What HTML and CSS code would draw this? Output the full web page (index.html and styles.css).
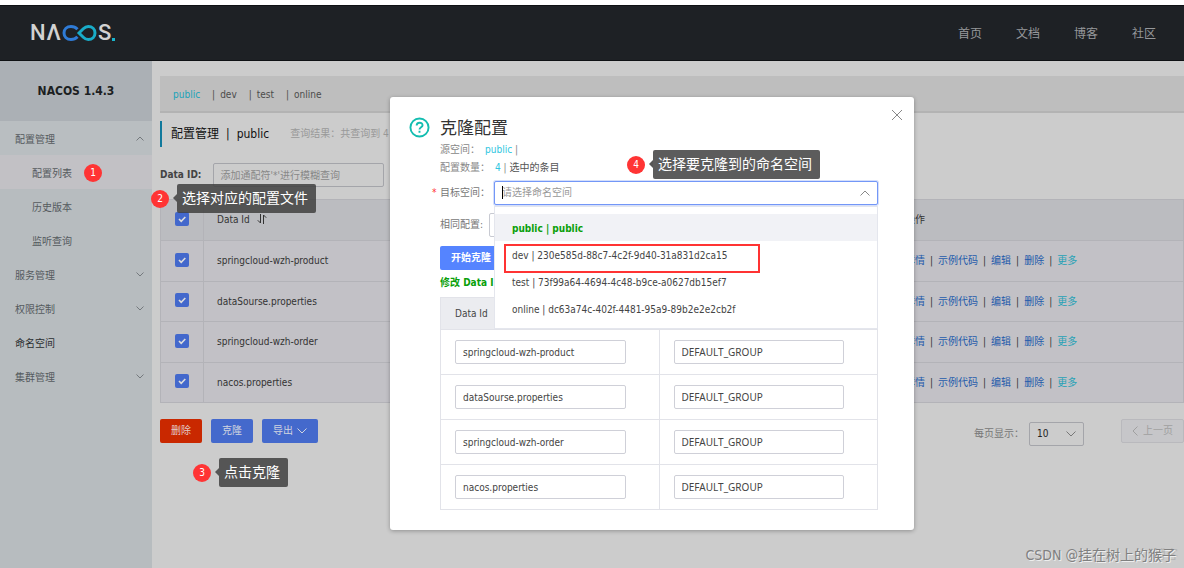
FILE: index.html
```html
<!DOCTYPE html>
<html lang="zh-CN">
<head>
<meta charset="utf-8">
<title>NACOS</title>
<link rel="stylesheet" href="styles.css">
</head>
<body>
<header class="topbar">
  <a class="logo" href="#" aria-label="NACOS">
    <span>N</span><span class="lambda">Λ</span>
    <svg width="35" height="18" viewBox="0 0 35 18" fill="none">
      <path stroke="#2f7bd6" d="M15.5 5.2C13.6 3.2 11.800 2.400 9 2.400C4.800 2.400 2 5.200 2 9s2.800 6.600 7 6.600c2.800 0 4.600-.8 6.500-2.800"/>
      <path stroke="#19acc9" d="M17 9l4.300-4.300C22.800 3.200 24.400 2.400 26.300 2.400C30.200 2.400 33 5.200 33 9s-2.800 6.600-6.700 6.600c-1.900 0-3.500-.8-5-2.300z"/>
    </svg>
    <span>S</span><i class="dot"></i>
  </a>
  <nav class="topnav"><a href="#">首页</a><a href="#">文档</a><a href="#">博客</a><a href="#">社区</a></nav>
</header>
<div class="body">
  <aside class="side">
    <h1 class="side-title">NACOS 1.4.3</h1>
    <nav class="menu">
      <a class="open" href="#">配置管理<svg class="chev" viewBox="0 0 8 5"><path d="M.5 4.500L4 1l3.500 3.500"/></svg></a>
      <a class="sub active" href="#">配置列表</a>
      <a class="sub" href="#">历史版本</a>
      <a class="sub" href="#">监听查询</a>
      <a href="#">服务管理<svg class="chev" viewBox="0 0 8 5"><path d="M.5 .5L4 4 7.500 .5"/></svg></a>
      <a href="#">权限控制<svg class="chev" viewBox="0 0 8 5"><path d="M.5 .5L4 4 7.500 .5"/></svg></a>
      <a class="plain" href="#">命名空间</a>
      <a href="#">集群管理<svg class="chev" viewBox="0 0 8 5"><path d="M.5 .5L4 4 7.500 .5"/></svg></a>
    </nav>
  </aside>
  <main class="main">
    <div class="spaces"><a class="on" href="#">public</a><b>|</b><a href="#">dev</a><b>|</b><a href="#">test</a><b>|</b><a href="#">online</a></div>
    <div class="heading"><h2>配置管理<span class="bar">|</span>public</h2><span class="result">查询结果：共查询到 4</span></div>
    <div class="search"><label for="did">Data ID:</label><input id="did" type="text" placeholder="添加通配符'*'进行模糊查询"></div>
    <table class="list">
      <thead><tr><th class="tick"><input type="checkbox" aria-label="全选" checked></th><th>Data Id<svg class="sort" viewBox="0 0 10 10"><path d="M3.500 0v9L.8 6.300M6.500 10V1l2.700 2.700"/></svg></th><th class="ops">操作</th></tr></thead>
      <tbody>
        <tr><td class="tick"><input type="checkbox" aria-label="springcloud-wzh-product" checked></td><td>springcloud-wzh-product</td><td class="ops"><a href="#">详情</a><i>|</i><a href="#">示例代码</a><i>|</i><a href="#">编辑</a><i>|</i><a href="#">删除</a><i>|</i><a class="more" href="#">更多</a></td></tr>
        <tr><td class="tick"><input type="checkbox" aria-label="dataSourse.properties" checked></td><td>dataSourse.properties</td><td class="ops"><a href="#">详情</a><i>|</i><a href="#">示例代码</a><i>|</i><a href="#">编辑</a><i>|</i><a href="#">删除</a><i>|</i><a class="more" href="#">更多</a></td></tr>
        <tr><td class="tick"><input type="checkbox" aria-label="springcloud-wzh-order" checked></td><td>springcloud-wzh-order</td><td class="ops"><a href="#">详情</a><i>|</i><a href="#">示例代码</a><i>|</i><a href="#">编辑</a><i>|</i><a href="#">删除</a><i>|</i><a class="more" href="#">更多</a></td></tr>
        <tr><td class="tick"><input type="checkbox" aria-label="nacos.properties" checked></td><td>nacos.properties</td><td class="ops"><a href="#">详情</a><i>|</i><a href="#">示例代码</a><i>|</i><a href="#">编辑</a><i>|</i><a href="#">删除</a><i>|</i><a class="more" href="#">更多</a></td></tr>
      </tbody>
    </table>
    <div class="footer">
      <button class="btn red">删除</button><button class="btn">克隆</button><button class="btn">导出<svg class="down" viewBox="0 0 10 6"><path d="M.5 .5L5 5 9.500 .5"/></svg></button>
      <div class="pager">
        <label for="size">每页显示：</label>
        <span class="size"><select id="size"><option>10</option></select><svg class="down" viewBox="0 0 10 6"><path d="M.5 .5L5 5 9.500 .5"/></svg></span>
        <button class="prev" disabled><svg viewBox="0 0 6 10"><path d="M5.500 .5L1 5l4.500 4.500"/></svg>上一页</button>
      </div>
    </div>
  </main>
</div>

<section class="dialog" role="dialog" aria-labelledby="dt">
  <button class="close" aria-label="关闭"><svg viewBox="0 0 12 12"><path d="M1 1l10 10M11 1L1 11"/></svg></button>
  <svg class="help" viewBox="0 0 22 22"><circle cx="11" cy="11" r="9.500"/><path d="M8 9c0-4 6.200-4 6.200-.4 0 2.200-3.200 2.200-3.200 4.600M11 14.500v2"/></svg>
  <div class="content">
    <h2 id="dt">克隆配置</h2>
    <p class="info">源空间：<em>public</em> |</p>
    <p class="info">配置数量：<em>4</em> | <span>选中的条目</span></p>
    <div class="field">
      <label for="target"><b>*</b>目标空间：</label>
      <div class="combo">
        <input id="target" type="text" role="combobox" aria-expanded="true" placeholder="请选择命名空间"><i class="caret"></i>
        <svg class="down" viewBox="0 0 10 6"><path d="M.5 5.500L5 1l4.500 4.500"/></svg>
        <ul class="options" role="listbox">
          <li class="cur" role="option">public | public</li>
          <li class="marked" role="option">dev | 230e585d-88c7-4c2f-9d40-31a831d2ca15</li>
          <li role="option">test | 73f99a64-4694-4c48-b9ce-a0627db15ef7</li>
          <li role="option">online | dc63a74c-402f-4481-95a9-89b2e2e2cb2f</li>
        </ul>
      </div>
    </div>
    <div class="field same"><label for="same">相同配置:</label><select id="same"></select></div>
    <button class="btn start">开始克隆</button>
    <p class="tip">修改 Data I</p>
    <table class="edit">
      <thead><tr><th>Data Id</th><th></th></tr></thead>
      <tbody>
        <tr><td><input type="text" aria-label="Data Id" value="springcloud-wzh-product"></td><td><input class="group" type="text" aria-label="Group" value="DEFAULT_GROUP"></td></tr>
        <tr><td><input type="text" aria-label="Data Id" value="dataSourse.properties"></td><td><input class="group" type="text" aria-label="Group" value="DEFAULT_GROUP"></td></tr>
        <tr><td><input type="text" aria-label="Data Id" value="springcloud-wzh-order"></td><td><input class="group" type="text" aria-label="Group" value="DEFAULT_GROUP"></td></tr>
        <tr><td><input type="text" aria-label="Data Id" value="nacos.properties"></td><td><input class="group" type="text" aria-label="Group" value="DEFAULT_GROUP"></td></tr>
      </tbody>
    </table>
  </div>
</section>

<div class="note n1"><span class="num">1</span></div>
<div class="note n2"><span class="num">2</span><span class="say">选择对应的配置文件</span></div>
<div class="note n3"><span class="num">3</span><span class="say">点击克隆</span></div>
<div class="note n4"><span class="num">4</span><span class="say">选择要克隆到的命名空间</span></div>
<div class="wm under">博客</div>
<div class="wm">CSDN @挂在树上的猴子</div>
</body>
</html>
```

FILE: styles.css
```css
* { box-sizing: border-box; }
body {
  margin: 0;
  padding-top: 5px;
  min-height: 100vh;
  display: flex;
  flex-direction: column;
  overflow: hidden;
  background: #fff;
  color: #333;
  font: 10px/16px "DejaVu Sans Condensed", "Noto Sans CJK SC", sans-serif;
}
input, button, select { font: inherit; color: inherit; }
a { color: inherit; text-decoration: none; }
h1, h2, p, ul { margin: 0; padding: 0; }
em, i { font-style: normal; }
svg { fill: none; stroke: currentColor; }

.topbar {
  height: 56px;
  flex: none;
  display: flex;
  align-items: center;
  justify-content: space-between;
  padding: 0 28px 0 30px;
  background: #1e2125;
  border-top: 1px solid #0f1114;
  border-bottom: 1px solid #0f1114;
}
.logo {
  display: flex;
  align-items: center;
  gap: 1px;
  color: #d2d2d2;
  font: 500 22px/24px Roboto, sans-serif;
}
.logo svg { stroke-width: 3px; }
.dot { width: 3px; height: 3px; margin-top: 12px; background: #19b5cc; }
.topnav { display: flex; gap: 34px; padding-top: 2px; font-size: 12px; color: #96989b; }

.body { flex: 1; display: flex; background: #ccc; }
.side { flex: none; width: 152px; background: #b7bcbf; }
.side-title {
  height: 60px;
  font-size: 12px;
  line-height: 60px;
  text-align: center;
  color: #1c1f22;
  background: #abb0b5;
}
.menu a {
  display: flex;
  align-items: center;
  justify-content: space-between;
  height: 34px;
  padding: 4px 8px 0 15px;
  color: #555a5e;
}
.menu .open { background: #b9bec1; }
.menu .sub { padding-left: 32px; }
.menu .active { background: #c2c1c5; }
.menu .plain { color: #2b2e31; }
.chev { width: 8px; height: 5px; margin-bottom: 4px; color: #74797d; }

.main { flex: 1; min-width: 0; padding: 15px 0 0 8px; }
.spaces {
  height: 37px;
  display: flex;
  align-items: center;
  padding: 3px 0 0 13px;
  background: #bebebe;
  border-bottom: 2px solid #b3b3b3;
  color: #4c4c4c;
}
.spaces .on { color: #1aa3b9; }
.spaces b { margin: 0 5px 0 12px; font-weight: 400; }
.heading {
  display: flex;
  align-items: center;
  height: 26px;
  margin-top: 8px;
  padding-left: 9px;
  border-left: 2px solid #11799c;
}
.heading h2 { font-size: 12px; font-weight: 400; color: #111; }
.bar { margin: 0 7px; }
.result { margin-left: 21px; color: #999; white-space: nowrap; }
.search {
  display: flex;
  align-items: center;
  gap: 12px;
  margin: 16px 0 12px;
  height: 24px;
}
.search label { font-weight: 700; color: #444; }
.search input {
  width: 171px;
  height: 24px;
  padding: 0 6px;
  background: #ccc;
  border: 1px solid #a4a5aa;
  border-radius: 2px;
}
.search input::placeholder { color: #888; }

.list { width: 100%; border-collapse: collapse; table-layout: fixed; background: #c2c1c6; }
.list th, .list td { height: 40px; padding: 0 13px; border: 1px solid #b3b3b8; text-align: left; font-weight: 400; }
.list th, .list tr:nth-child(odd) td { height: 41px; }
.list th { background: #bbbcc0; }
.list .tick { width: 43px; padding-bottom: 3px; }
.list .tick input {
  appearance: none;
  display: block;
  width: 14px;
  height: 14px;
  margin: 0 auto;
  border-radius: 2px;
  background: #4368cc url("data:image/svg+xml,%3Csvg xmlns='http://www.w3.org/2000/svg' viewBox='0 0 14 14'%3E%3Cpath d='M4 7l2.200 2.300L10.300 5' fill='none' stroke='%23ddd' stroke-width='1.600'/%3E%3C/svg%3E");
}
.list th:nth-child(2) { width: 680px; }
.sort { width: 10px; height: 10px; margin-left: 7px; vertical-align: -1px; }
.list .ops { border-left: 0; padding-left: 21px; white-space: nowrap; }
.ops a { color: #1f5bab; }
.ops .more { color: #27a2b6; }
.ops i { margin: 0 5px; }

.footer { display: flex; gap: 9px; padding-top: 16px; }
.btn {
  height: 24px;
  padding: 0 11px;
  border: 0;
  border-radius: 2px;
  background: #4469cc;
  color: #d0d4df;
}
.red { background: #c92800; color: #e2cbc6; }
.down { width: 10px; height: 6px; margin-left: 4px; }
.pager { display: flex; margin-left: auto; color: #777; }
.pager label { margin-top: 7px; width: 55px; }
.size { position: relative; width: 55px; height: 24px; margin: 3px 37px 0 0; }
.size select {
  appearance: none;
  width: 100%;
  height: 24px;
  padding: 0 7px;
  background: #ccc;
  border: 1px solid #a4a5aa;
  border-radius: 2px;
  color: #222;
}
.size .down { position: absolute; right: 8px; top: 9px; }
.prev {
  display: flex;
  align-items: center;
  gap: 5px;
  height: 24px;
  padding: 0 10px;
  background: #c6c6c9;
  border: 1px solid #b9b9bd;
  border-radius: 2px;
  color: #a0a0a0;
  white-space: nowrap;
}
.prev svg { width: 6px; height: 10px; }

.dialog {
  position: absolute;
  left: 390px;
  top: 97px;
  width: 524px;
  padding: 20px 36px 20px 19px;
  display: flex;
  gap: 10px;
  background: #fff;
  border-radius: 3px;
  box-shadow: 0 1px 4px rgba(0, 0, 0, .3);
}
.close { position: absolute; right: 11px; top: 12px; width: 12px; height: 12px; padding: 0; border: 0; background: none; color: #888; }
.close svg { display: block; width: 12px; height: 12px; }
.help { flex: none; width: 21px; height: 21px; color: #13bdb0; stroke-width: 2; }
.content { flex: 1; min-width: 0; }
.content h2 { font-size: 17px; line-height: 22px; margin-bottom: 2px; font-weight: 400; color: #333; }
.info { height: 18px; line-height: 18px; color: #888; }
.info em { margin-left: 5px; color: #2fc6e0; }
.info span { color: #555; }
.field { display: flex; align-items: center; height: 25px; margin-top: 3px; color: #777; }
.field label { flex: none; width: 54px; white-space: nowrap; }
.field b { position: absolute; margin-left: -8px; color: #f33; font-weight: 400; }
.combo { position: relative; flex: 1; }
.combo input {
  display: block;
  width: 100%;
  height: 24px;
  padding: 0 7px;
  border: 1px solid #7397f7;
  border-radius: 2px;
  box-shadow: 0 0 0 1px #d5dffb;
}
.combo input::placeholder { color: #999; }
.caret { position: absolute; left: 8px; top: 5px; width: 1px; height: 13px; background: #000; }
.combo .down { position: absolute; right: 8px; top: 9px; color: #888; }
.options {
  position: absolute;
  z-index: 1;
  top: 25px;
  left: 0;
  right: 0;
  padding: 7px 0 6px;
  list-style: none;
  background: #fff;
  border: 1px solid #e4e6ed;
  color: #444;
}
.options li { height: 27px; padding: 0 17px; line-height: 29px; }
.options .cur { background: #f1f2f6; color: #0a9f0a; font-weight: 700; }
.options .marked { position: relative; }
.marked::after { content: ""; position: absolute; left: 9px; top: 3px; width: 252px; height: 25px; border: 2px solid #f33; }
.same { margin-top: 7px; }
.same label { width: 49px; }
.same select { flex: none; appearance: none; width: 120px; height: 24px; padding: 0 8px; background: #fff; border: 1px solid #c8cad2; border-radius: 2px; }
.start { display: block; margin-top: 9px; background: #5584ff; color: #fff; font-weight: 700; }
.tip { margin: 5px 0 6px; color: #0a9f0a; font-weight: 700; }
.edit { width: 100%; border-collapse: collapse; table-layout: fixed; color: #444; }
.edit th, .edit td { border: 1px solid #e2e3e9; padding: 0 33px 0 14px; text-align: left; font-weight: 400; }
.edit th { height: 32px; background: #ebecf0; }
.edit td { height: 45px; }
.edit input { display: block; width: 100%; height: 24px; padding: 0 7px; border: 1px solid #cfd0d8; border-radius: 2px; line-height: 20px; }
.edit .group { font-family: "Noto Sans", sans-serif; }

.note { position: absolute; z-index: 2; display: flex; align-items: center; gap: 8px; color: #fff; }
.num { width: 18px; height: 18px; border-radius: 50%; background: #ff3434; text-align: center; line-height: 18px; }
.say { position: relative; height: 29px; padding: 0 8px 0 5px; border-radius: 2px; background: rgba(65, 65, 65, .86); font-size: 14px; line-height: 29px; white-space: nowrap; }
.say::before { content: ""; position: absolute; left: -4px; top: 10px; border: 4px solid transparent; border-left: 0; border-right-color: #555; }
.n1 { left: 84px; top: 164px; }
.n2 { left: 151px; top: 184px; }
.n3 { left: 193px; top: 458px; }
.n4 { left: 627px; top: 150px; }
.wm { position: absolute; z-index: 1; right: 8px; bottom: 4px; font-size: 14px; line-height: 18px; color: #808080; text-shadow: 1px 1px 0 #eee; white-space: nowrap; }
.under { z-index: 0; right: 6px; font-size: 12px; color: #b4b4b4; text-shadow: none; }
```
